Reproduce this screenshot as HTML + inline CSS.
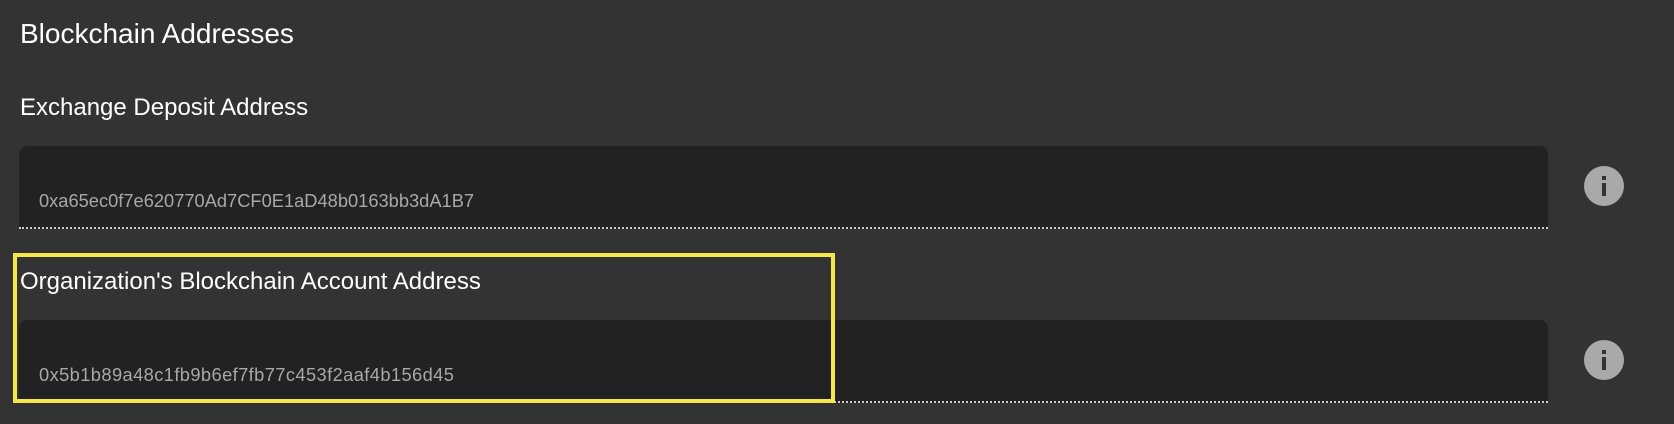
<!DOCTYPE html>
<html><head><style>
html,body{margin:0;padding:0;width:1674px;height:424px;background:#333;overflow:hidden;font-family:"Liberation Sans",sans-serif;color:#fff}
.a{position:absolute;white-space:nowrap}
.t{font-size:28px;left:20px;top:18px}
.l{font-size:24px;left:20px}
.f{position:absolute;left:19px;width:1529px;background:#222;border-radius:8px 8px 0 0;border-bottom:2px dotted #ccc;box-sizing:border-box}
.v{position:absolute;left:20px;font-size:18.3px;color:#a8a8a8}
.i{position:absolute;width:40px;height:40px;border-radius:50%;background:#a9a9a9;left:1584px}
.i:before{content:"";position:absolute;left:18px;top:10px;width:4px;height:4px;background:#333}
.i:after{content:"";position:absolute;left:18px;top:17px;width:4px;height:13px;background:#333}
.y{position:absolute;left:13px;top:253px;width:822px;height:150px;border:4px solid #f5e94a;box-sizing:border-box}
</style></head><body>
<div class="a t">Blockchain Addresses</div>
<div class="a l" style="top:94px">Exchange Deposit Address</div>
<div class="f" style="top:146px;height:83px"><div class="v" style="top:44px">0xa65ec0f7e620770Ad7CF0E1aD48b0163bb3dA1B7</div></div>
<div class="i" style="top:166px"></div>
<div class="a l" style="top:268px">Organization's Blockchain Account Address</div>
<div class="f" style="top:320px;height:83px"><div class="v" style="top:44px;letter-spacing:0.4px">0x5b1b89a48c1fb9b6ef7fb77c453f2aaf4b156d45</div></div>
<div class="i" style="top:340px"></div>
<div class="y"></div>
</body></html>
